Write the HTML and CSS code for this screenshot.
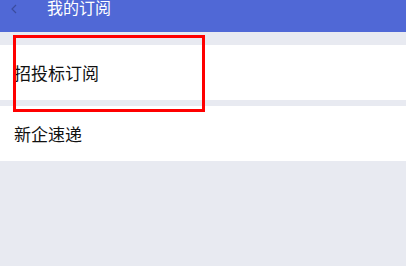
FILE: index.html
```html
<!DOCTYPE html>
<html lang="zh-CN">
<head>
    <meta charset="UTF-8">
    <meta name="viewport" content="width=device-width, initial-scale=1.0">
    <title>我的订阅</title>
    <link rel="stylesheet" href="styles.css">
</head>
<body>

    <header class="top-bar">
        <span class="back">
            <svg width="6" height="10" viewBox="0 0 6 10"><path d="M5 1 L1 5 L5 9" fill="none" stroke="#3b4c9e" stroke-width="1.2"/></svg>
        </span>
        <span class="title">我的订阅</span>
    </header>

    <section class="sub-list">
        <div class="sub-item">招投标订阅</div>
        <div class="sub-item">新企速递</div>
    </section>

    <!-- highlight box -->
    <div class="mark"></div>

</body>
</html>
```

FILE: styles.css
```css
* {
    margin: 0;
    padding: 0;
    box-sizing: border-box;
}

body {
    font-family: "Noto Sans CJK SC", "Liberation Sans", sans-serif;
    background-color: #e8eaf1;
    width: 406px;
    height: 266px;
    overflow: hidden;
    position: relative;
}

.top-bar {
    height: 32px;
    background-color: #5068d6;
    display: flex;
    align-items: flex-start;
    padding-left: 11px;
}

.top-bar .back {
    display: flex;
    margin-top: 4px;
}

.top-bar .title {
    color: #ffffff;
    font-size: 16px;
    line-height: 17px;
    margin-left: 30px;
    margin-top: -1px;
}

.sub-list {
    padding-top: 13px;
}

.sub-item {
    background-color: #ffffff;
    height: 55px;
    padding-left: 14px;
    font-size: 17px;
    color: #111;
    display: flex;
    align-items: center;
    margin-bottom: 6px;
}

.mark {
    position: absolute;
    left: 13px;
    top: 35px;
    width: 192px;
    height: 77px;
    border: 3px solid #ff0000;
}
```
